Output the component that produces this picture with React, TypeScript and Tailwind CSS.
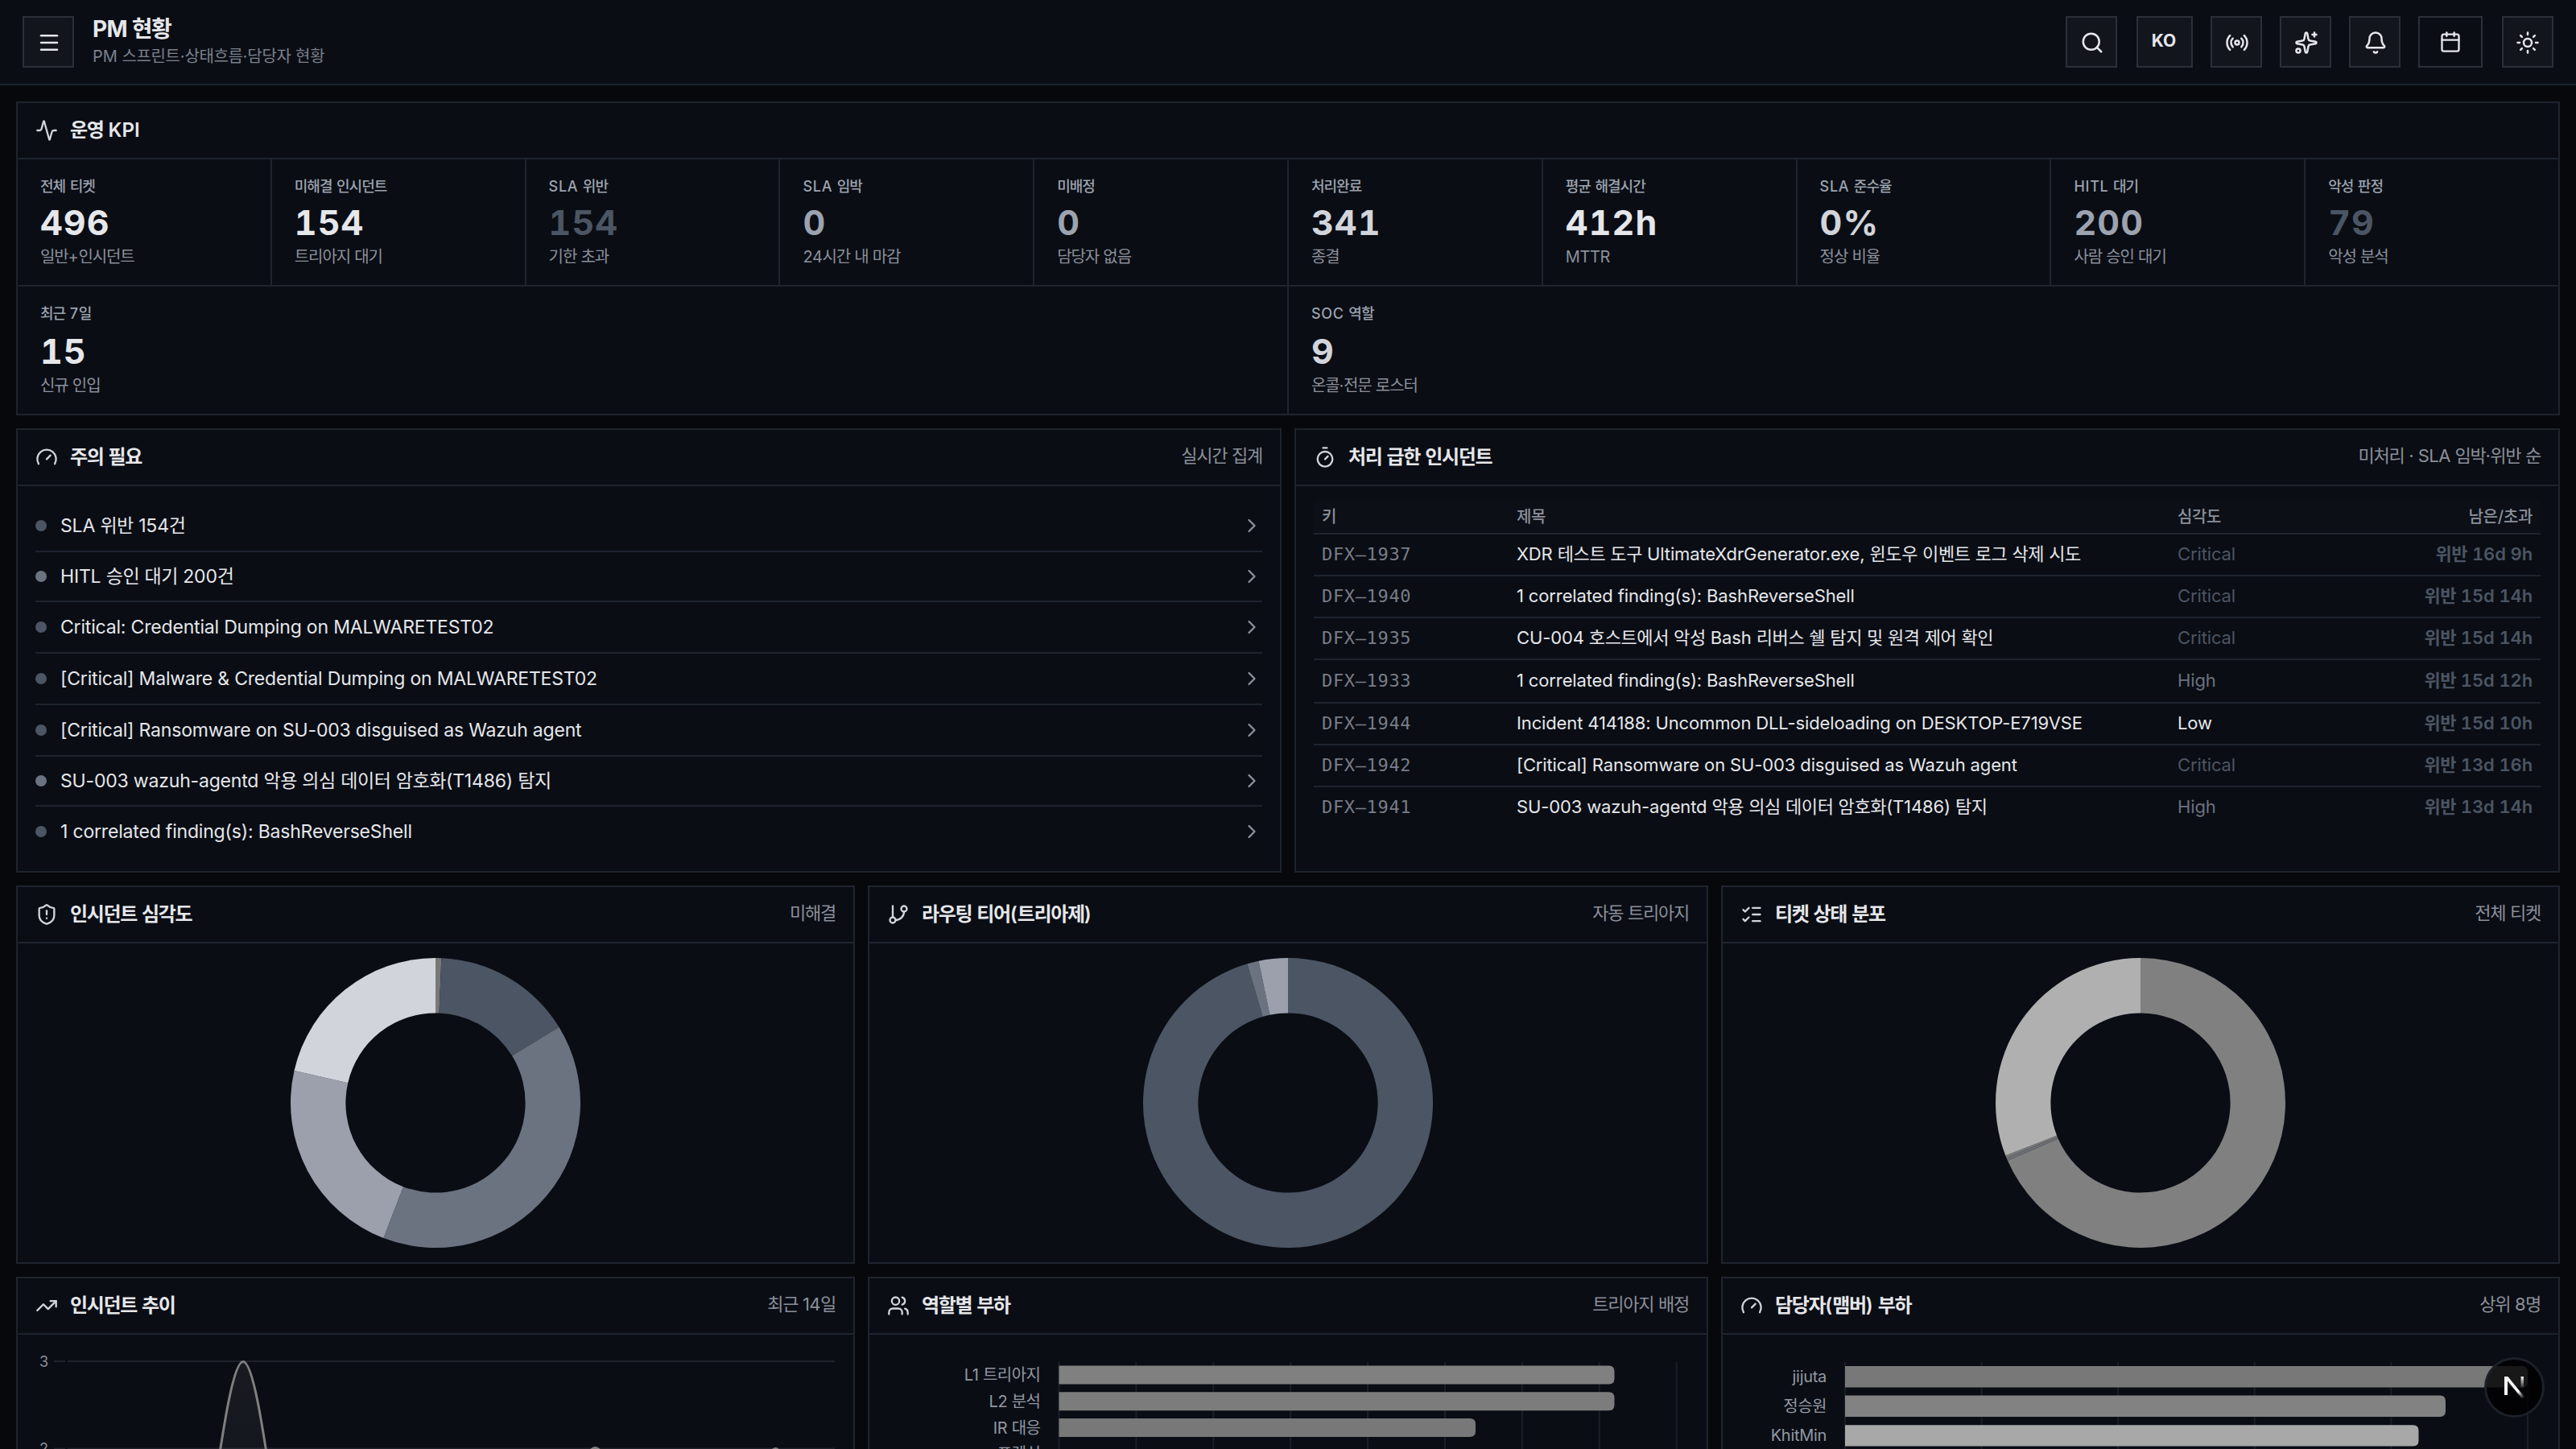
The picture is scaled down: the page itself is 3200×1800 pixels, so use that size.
import { Fragment } from "react";
import type { ReactNode } from "react";
import {
  Activity,
  Bell,
  Calendar,
  ChevronRight,
  Gauge,
  GitBranch,
  ListChecks,
  Menu,
  Radio,
  Search,
  ShieldAlert,
  Sparkles,
  Sun,
  Timer,
  TrendingUp,
  Users,
} from "lucide-react";
import type { LucideIcon } from "lucide-react";
import clsx from "clsx";

interface Kpi {
  label: string;
  value: string;
  hint: string;
  tone: string;
}

const KPIS: Kpi[] = [
  { label: "전체 티켓", value: "496", hint: "일반+인시던트", tone: "text-gray-200" },
  { label: "미해결 인시던트", value: "154", hint: "트리아지 대기", tone: "text-gray-200" },
  { label: "SLA 위반", value: "154", hint: "기한 초과", tone: "text-[#4b5563]" },
  { label: "SLA 임박", value: "0", hint: "24시간 내 마감", tone: "text-[#9ca3af]" },
  { label: "미배정", value: "0", hint: "담당자 없음", tone: "text-[#9ca3af]" },
  { label: "처리완료", value: "341", hint: "종결", tone: "text-[#d1d5db]" },
  { label: "평균 해결시간", value: "412h", hint: "MTTR", tone: "text-gray-200" },
  { label: "SLA 준수율", value: "0%", hint: "정상 비율", tone: "text-[#d1d5db]" },
  { label: "HITL 대기", value: "200", hint: "사람 승인 대기", tone: "text-[#9ca3af]" },
  { label: "악성 판정", value: "79", hint: "악성 분석", tone: "text-[#4b5563]" },
];

const KPIS_WIDE: Kpi[] = [
  { label: "최근 7일", value: "15", hint: "신규 인입", tone: "text-gray-200" },
  { label: "SOC 역할", value: "9", hint: "온콜·전문 로스터", tone: "text-[#d1d5db]" },
];

const ALERTS = [
  { text: "SLA 위반 154건", dot: "bg-[#4b5563]", row: "h-[62px] pb-[3px]" },
  { text: "HITL 승인 대기 200건", dot: "bg-[#6b7280]", row: "h-[62px]" },
  { text: "Critical: Credential Dumping on MALWARETEST02", dot: "bg-[#4b5563]", row: "h-[64px]" },
  { text: "[Critical] Malware & Credential Dumping on MALWARETEST02", dot: "bg-[#4b5563]", row: "h-[64px]" },
  { text: "[Critical] Ransomware on SU-003 disguised as Wazuh agent", dot: "bg-[#4b5563]", row: "h-[64px]" },
  { text: "SU-003 wazuh-agentd 악용 의심 데이터 암호화(T1486) 탐지", dot: "bg-[#6b7280]", row: "h-[62px]" },
  { text: "1 correlated finding(s): BashReverseShell", dot: "bg-[#4b5563]", row: "h-[62px]" },
];

const INCIDENTS = [
  { key: "DFX-1937", title: "XDR 테스트 도구 UltimateXdrGenerator.exe, 윈도우 이벤트 로그 삭제 시도", severity: "Critical", due: "위반 16d 9h", row: "h-[52px]" },
  { key: "DFX-1940", title: "1 correlated finding(s): BashReverseShell", severity: "Critical", due: "위반 15d 14h", row: "h-[52px]" },
  { key: "DFX-1935", title: "CU-004 호스트에서 악성 Bash 리버스 쉘 탐지 및 원격 제어 확인", severity: "Critical", due: "위반 15d 14h", row: "h-[52px]" },
  { key: "DFX-1933", title: "1 correlated finding(s): BashReverseShell", severity: "High", due: "위반 15d 12h", row: "h-[54px]" },
  { key: "DFX-1944", title: "Incident 414188: Uncommon DLL-sideloading on DESKTOP-E719VSE", severity: "Low", due: "위반 15d 10h", row: "h-[52px]" },
  { key: "DFX-1942", title: "[Critical] Ransomware on SU-003 disguised as Wazuh agent", severity: "Critical", due: "위반 13d 16h", row: "h-[52px]" },
  { key: "DFX-1941", title: "SU-003 wazuh-agentd 악용 의심 데이터 암호화(T1486) 탐지", severity: "High", due: "위반 13d 14h", row: "h-[50px]" },
];

const SEVERITY_TONE: Record<string, string> = {
  Critical: "text-[#4b5563]",
  High: "text-[#6b7280]",
  Low: "text-gray-200",
};

const SEVERITY_SLICES = [
  { value: 1, color: "#787878" },
  { value: 24, color: "#4b5563" },
  { value: 61, color: "#6b7280" },
  { value: 35, color: "#9ca0ac" },
  { value: 33, color: "#d1d5db" },
];

const TIER_SLICES = [
  { value: 147, color: "#4b5563" },
  { value: 2, color: "#6b7280" },
  { value: 5, color: "#9ca0ac" },
];

const STATUS_SLICES = [
  { value: 339.6, color: "#808080" },
  { value: 1.6, color: "#6c7076" },
  { value: 1.4, color: "#787878" },
  { value: 153.4, color: "#b0b0b0" },
];

// Hangul from the CJK fallback is set wider than the Latin, so pull it in a little
const Ko = ({ children, loose }: { children: string; loose?: boolean }) => (
  <>
    {children.split(/([가-힣]+)/).map((part, i) =>
      i % 2 ? (
        <span key={i} className={loose ? "tracking-[-0.018em]" : "tracking-[-0.055em]"}>{part}</span>
      ) : (
        <Fragment key={i}>{part}</Fragment>
      )
    )}
  </>
);

const HeaderButton = ({ className, children }: { className?: string; children: ReactNode }) => (
  <button
    className={clsx(
      "flex h-16 items-center justify-center border-2 border-[#2b2f38] pt-px pl-0.5 text-gray-200",
      className ?? "w-16 bg-[#12151c]"
    )}
  >
    {children}
  </button>
);

const Panel = ({
  icon: Icon,
  title,
  note,
  className,
  children,
}: {
  icon: LucideIcon;
  title: string;
  note?: string;
  className?: string;
  children: ReactNode;
}) => (
  <section className={clsx("flex min-w-0 flex-col border-2 border-[#1e242e] bg-[#0a0d14]", className)}>
    <div className="flex h-[70px] shrink-0 items-center border-b-2 border-[#1e242e] px-[22px]">
      <Icon size={28} strokeWidth={2} className="text-[#d1d5db]" />
      <h2 className="ml-[15px] text-[24px] leading-8 font-semibold text-gray-200">
        <Ko>{title}</Ko>
      </h2>
      {note && (
        <span className="mb-1 ml-auto text-[22px] leading-7 tracking-[-0.025em] text-[#8b909b]">
          <Ko>{note}</Ko>
        </span>
      )}
    </div>
    {children}
  </section>
);

const KpiCell = ({ kpi, wide }: { kpi: Kpi; wide?: boolean }) => (
  <div className="bg-[#0a0d14] px-[28px] pt-5">
    <div className="text-[18px] leading-[27px] font-medium tracking-[0.04em] text-[#9ca3af]">
      <Ko>{kpi.label}</Ko>
    </div>
    <div
      className={clsx(
        "text-[43px] leading-[48px] font-bold tracking-[0.025em] tabular-nums",
        wide ? "mt-[9px]" : "mt-[7px]",
        kpi.tone
      )}
    >
      {kpi.value}
    </div>
    <div className="mt-[5px] text-[20px] leading-7 tracking-[-0.02em] text-[#8b909b]">
      <Ko>{kpi.hint}</Ko>
    </div>
  </div>
);

const polar = (r: number, turn: number) => {
  const a = turn * Math.PI * 2;
  return `${180 + r * Math.sin(a)} ${180 - r * Math.cos(a)}`;
};

const Donut = ({ slices }: { slices: { value: number; color: string }[] }) => {
  const total = slices.reduce((sum, s) => sum + s.value, 0);
  let from = 0;

  return (
    <div className="flex h-[396px] items-center justify-center">
      <svg width="360" height="360" viewBox="0 0 360 360">
        {slices.map((s, i) => {
          const start = from / total;
          from += s.value;
          const end = from / total;
          const large = end - start > 0.5 ? 1 : 0;
          return (
            <path
              key={i}
              fill={s.color}
              d={`M${polar(180, start)}A180 180 0 ${large} 1 ${polar(180, end)}L${polar(111.6, end)}A111.6 111.6 0 ${large} 0 ${polar(111.6, start)}Z`}
            />
          );
        })}
      </svg>
    </div>
  );
};

const TREND_LINE =
  "M61 358H207C231.5 358 255.5 33.5 280 33.5S328.5 358 353 358H571C640 358 690 140.5 717.5 140.5S770 358 800 358S920 141.5 941.5 141.5S990 358 1015 358";

const TrendChart = () => (
  <svg className="block" width="1038" height="360" viewBox="0 0 1038 360">
    <defs>
      <linearGradient id="trend" x1="0" y1="0" x2="0" y2="1">
        <stop offset="0" stopColor="#808080" stopOpacity="0.12" />
        <stop offset="1" stopColor="#808080" stopOpacity="0.02" />
      </linearGradient>
    </defs>
    {[33, 141.5, 250].map((y, i) => (
      <g key={y}>
        <path d={`M45 ${y}H59M62 ${y}H1015`} stroke="#1e222b" strokeWidth="2" />
        <text x="38" y={y + 6.5} textAnchor="end" fontSize="18" fill="#8b909b">{3 - i}</text>
      </g>
    ))}
    <path d={`${TREND_LINE}Z`} fill="url(#trend)" />
    <path d={TREND_LINE} fill="none" stroke="#808080" strokeWidth="3" />
  </svg>
);

interface Bar {
  label: string;
  width: number;
  color: string;
}

const BarChart = ({
  bars,
  x,
  y,
  size,
  pitch,
  gap,
  lines,
}: {
  bars: Bar[];
  x: number;
  y: number;
  size: number;
  pitch: number;
  gap: number;
  lines: number;
}) => (
  <svg className="block" width="1038" height="360" viewBox="0 0 1038 360">
    {Array.from({ length: lines }, (_, i) => (
      <path key={i} d={`M${x + i * gap} 34V360`} stroke="#1a1e27" strokeWidth="2" />
    ))}
    {bars.map((bar, i) => {
      const top = y + i * pitch;
      const right = x + bar.width;
      return (
        <g key={bar.label}>
          {bar.width > 0 && (
            <path
              fill={bar.color}
              d={`M${x} ${top}H${right - 7}Q${right} ${top} ${right} ${top + 7}V${top + size - 7}Q${right} ${top + size} ${right - 7} ${top + size}H${x}Z`}
            />
          )}
          <text
            x={x - 23}
            y={top + size / 2 + 7}
            textAnchor="end"
            fontSize="20"
            fill="#9298a3"
            className="tracking-[-0.015em]"
          >
            {bar.label.split(/([가-힣]+)/).map((part, j) => (
              <tspan key={j} className={j % 2 ? "tracking-[-0.025em]" : undefined}>{part}</tspan>
            ))}
          </text>
        </g>
      );
    })}
  </svg>
);

const ROLE_BARS: Bar[] = [
  { label: "L1 트리아지", width: 690, color: "#808080" },
  { label: "L2 분석", width: 690, color: "#7c7c7c" },
  { label: "IR 대응", width: 517.5, color: "#787878" },
  { label: "포렌식", width: 0, color: "#787878" },
];

const MEMBER_BARS: Bar[] = [
  { label: "jijuta", width: 848, color: "#787878" },
  { label: "정승원", width: 746, color: "#828282" },
  { label: "KhitMin", width: 712.5, color: "#a8a8a8" },
];

const App = () => {
  return (
    <div className="relative h-[1800px] w-[3200px] overflow-hidden bg-[#06080b] font-['Inter','Noto_Sans_CJK_KR',sans-serif]">
      <header className="flex h-[106px] items-center border-b-2 border-[#1e242e] bg-[#0a0d14] px-7">
        <HeaderButton>
          <Menu size={30} />
        </HeaderButton>
        <div className="ml-[23px]">
          <h1 className="-mt-0.5 mb-0.5 text-[28px] leading-9 font-bold tracking-[-0.025em] text-gray-200">
            <Ko>PM 현황</Ko>
          </h1>
          <p className="text-[20px] leading-7 text-[#7c818c]">
            <Ko loose>PM 스프린트·상태흐름·담당자 현황</Ko>
          </p>
        </div>
        <div className="ml-auto flex items-center gap-[22px]">
          <HeaderButton>
            <Search size={30} />
          </HeaderButton>
          <HeaderButton className="ml-0.5 w-[70px] bg-[#12151c]">
            <span className="mb-1 pr-1 text-[21px] leading-6 font-bold">KO</span>
          </HeaderButton>
          <HeaderButton>
            <Radio size={30} />
          </HeaderButton>
          <HeaderButton>
            <Sparkles size={30} />
          </HeaderButton>
          <HeaderButton>
            <Bell size={30} />
          </HeaderButton>
          <HeaderButton className="mr-0.5 w-20">
            <Calendar size={28} className="-ml-0.5 -mt-0.5" />
          </HeaderButton>
          <HeaderButton>
            <Sun size={30} className="-ml-0.5" />
          </HeaderButton>
        </div>
      </header>

      <main className="flex flex-col gap-4 px-5 pt-5">
        <Panel icon={Activity} title="운영 KPI" className="h-[390px]">
          <div className="flex grow flex-col gap-0.5 bg-[#1e242e]">
            <div className="grid h-[156px] grid-cols-10 gap-0.5">
              {KPIS.map((kpi) => (
                <KpiCell key={kpi.label} kpi={kpi} />
              ))}
            </div>
            <div className="grid h-[158px] grid-cols-2 gap-0.5">
              {KPIS_WIDE.map((kpi) => (
                <KpiCell key={kpi.label} kpi={kpi} wide />
              ))}
            </div>
          </div>
        </Panel>

        <div className="grid h-[552px] grid-cols-2 gap-4">
          <Panel icon={Gauge} title="주의 필요" note="실시간 집계">
            <ul className="px-[22px] pt-5">
              {ALERTS.map((alert) => (
                <li
                  key={alert.text}
                  className={clsx(
                    "flex items-center border-b-2 border-[#1e242e] text-[23px] tracking-[-0.008em] text-gray-200 last:border-b-0",
                    alert.row
                  )}
                >
                  <span className={clsx("size-3.5 rounded-full", alert.dot)} />
                  <span className="ml-[17px] leading-8">
                    <Ko loose>{alert.text}</Ko>
                  </span>
                  <ChevronRight size={28} className="-mr-px ml-auto text-[#8b909b]" />
                </li>
              ))}
            </ul>
          </Panel>

          <Panel icon={Timer} title="처리 급한 인시던트" note="미처리 · SLA 임박·위반 순">
            <div className="px-[22px] pt-[18px] text-[22px] tracking-[-0.006em]">
              <div className="flex h-[42px] items-center border-b-2 border-[#1e242e] bg-[#0c0f16] px-2.5 text-[20px] font-medium text-[#8b909b]">
                <span className="w-[242px]"><Ko loose>키</Ko></span>
                <span className="w-[821px]"><Ko loose>제목</Ko></span>
                <span><Ko loose>심각도</Ko></span>
                <span className="ml-auto"><Ko loose>남은/초과</Ko></span>
              </div>
              {INCIDENTS.map((item) => (
                <div
                  key={item.key}
                  className={clsx(
                    "flex items-center border-b-2 border-[#1e242e] px-2.5 pb-0.5 last:border-b-0",
                    item.row
                  )}
                >
                  <span className="w-[242px] font-['DejaVu_Sans_Mono',monospace] tracking-[0.03em] text-[#787d87]">
                    {item.key.replace("-", "–")}
                  </span>
                  <span className="w-[821px] whitespace-nowrap text-gray-200">
                    <Ko loose>{item.title}</Ko>
                  </span>
                  <span className={SEVERITY_TONE[item.severity]}>{item.severity}</span>
                  <span className="ml-auto font-semibold text-[#4b5563] tabular-nums">
                    <Ko loose>{item.due}</Ko>
                  </span>
                </div>
              ))}
            </div>
          </Panel>
        </div>

        <div className="grid grid-cols-[1042px_1044px_1042px] gap-4">
          <Panel icon={ShieldAlert} title="인시던트 심각도" note="미해결">
            <Donut slices={SEVERITY_SLICES} />
          </Panel>
          <Panel icon={GitBranch} title="라우팅 티어(트리아제)" note="자동 트리아지">
            <Donut slices={TIER_SLICES} />
          </Panel>
          <Panel icon={ListChecks} title="티켓 상태 분포" note="전체 티켓">
            <Donut slices={STATUS_SLICES} />
          </Panel>
        </div>

        <div className="grid grid-cols-[1042px_1044px_1042px] gap-4">
          <Panel icon={TrendingUp} title="인시던트 추이" note="최근 14일">
            <TrendChart />
          </Panel>
          <Panel icon={Users} title="역할별 부하" note="트리아지 배정">
            <BarChart bars={ROLE_BARS} x={235.5} y={38.5} size={23} pitch={32.8} gap={95.9} lines={9} />
          </Panel>
          <Panel icon={Gauge} title="담당자(맴버) 부하" note="상위 8명">
            <BarChart bars={MEMBER_BARS} x={152} y={39} size={26.4} pitch={36.6} gap={169.6} lines={6} />
          </Panel>
        </div>
      </main>

      <div className="absolute right-[39px] bottom-[39px] flex size-[75px] items-center justify-center rounded-full border-[3px] border-[#1b2029] bg-black/80">
        <svg width="28" height="30" viewBox="0 0 28 30" fill="none">
          <defs>
            <linearGradient id="diag" x1="15" y1="16" x2="25" y2="28" gradientUnits="userSpaceOnUse">
              <stop offset="0.3" stopColor="#f3f4f6" />
              <stop offset="1" stopColor="#f3f4f6" stopOpacity="0" />
            </linearGradient>
            <linearGradient id="stem" x1="23" y1="1" x2="23" y2="16" gradientUnits="userSpaceOnUse">
              <stop offset="0" stopColor="#f3f4f6" />
              <stop offset="1" stopColor="#f3f4f6" stopOpacity="0" />
            </linearGradient>
          </defs>
          <path d="M1 24V1H5.4L26.5 27L23.5 29L5 6.5V24Z" fill="url(#diag)" />
          <path d="M21.5 1H25V16H21.5Z" fill="url(#stem)" />
        </svg>
      </div>
    </div>
  );
};

export default App;
